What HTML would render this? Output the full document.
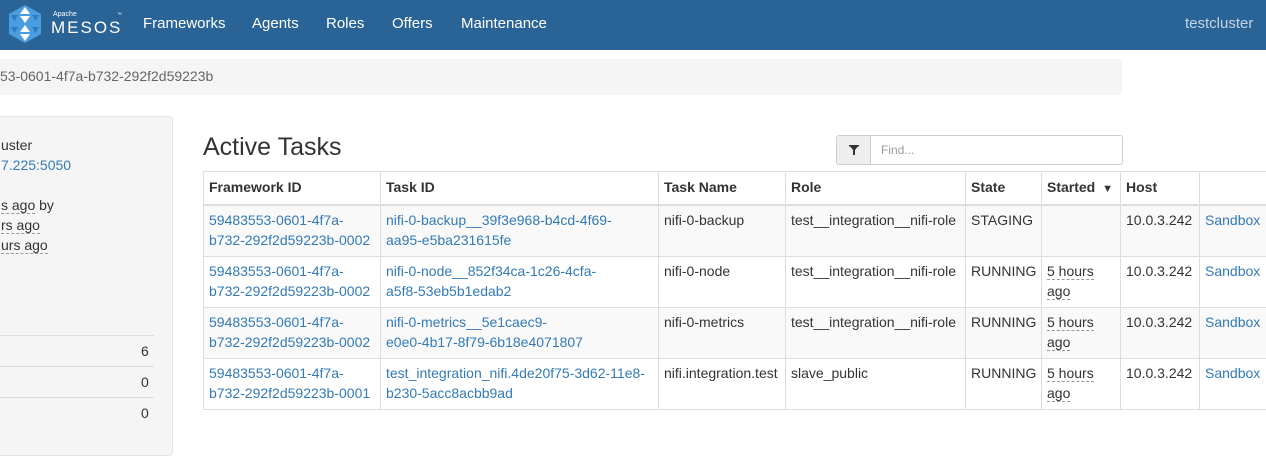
<!DOCTYPE html>
<html><head><style>
*{box-sizing:border-box}
body{margin:0;width:1266px;height:444px;overflow:hidden;background:#fff;font-family:"Liberation Sans",Arial,sans-serif;font-size:14px;color:#333;position:relative}
.nav{position:absolute;left:0;top:0;width:1266px;height:50px;background:#2a6496}
.nav a{position:absolute;top:15px;color:#fff;font-size:15px;text-decoration:none}
.bc{position:absolute;left:-10px;top:59px;width:1132px;height:36px;background:#f5f5f5;border-radius:4px;color:#666;font-size:14px;padding:9px 0 0 10px}
.well{position:absolute;left:-10px;top:116px;width:183px;height:340px;background:#f5f5f5;border:1px solid #e3e3e3;border-radius:4px}
.t{position:absolute;line-height:20px}
.lnk{color:#337ab7}
.dash{border-bottom:1px dashed #999}
h2{position:absolute;left:203px;top:133px;margin:0;font-weight:400;font-size:25px;color:#333}
.srch{position:absolute;left:836px;top:135px;width:287px;height:30px;border:1px solid #ccc;border-radius:3px}
.srch .b{position:absolute;left:0;top:0;width:34px;height:28px;background:#eee;border-right:1px solid #ccc}
.srch span{position:absolute;left:44px;top:7px;color:#999;font-size:12px}
table{position:absolute;left:203px;top:171px;border-collapse:collapse;table-layout:fixed;width:1100px;font-size:14px}
td,th{border:1px solid #ddd;padding:4px 5px 5px;vertical-align:top;text-align:left;line-height:20px;white-space:nowrap;overflow:hidden}
th{height:32px;border-bottom:2px solid #ddd;font-weight:bold;padding-top:5px}
td{height:51px}
tr.o td{background:#f9f9f9}
td a{color:#337ab7;text-decoration:none}
</style></head><body>
<div class="nav">
<svg style="position:absolute;left:7px;top:4px" width="36" height="40" viewBox="0 0 36 40">
<polygon points="18,1 34,10 34,30 18,39 2,30 2,10" fill="#4a9ee0"/>
<g fill="#fff"><polygon points="18,3 23,10 13,10"/><polygon points="13,12 23,12 18,19"/><polygon points="18,21 23,28 13,28"/><polygon points="13,30 23,30 18,37"/></g>
<g fill="#2f7bc1"><polygon points="4,11 11,11 7.5,17"/><polygon points="25,11 32,11 28.5,17"/><polygon points="4,23 11,23 7.5,29"/><polygon points="25,23 32,23 28.5,29"/></g>
</svg>
<div style="position:absolute;left:53px;top:11px;color:#fff;font-size:7px">Apache</div>
<div style="position:absolute;left:51px;top:18px;color:#fff;font-size:17px;letter-spacing:2px;font-weight:300">MESOS</div>
<div style="position:absolute;left:117px;top:12px;color:#fff;font-size:5px">™</div>
<a style="left:143px">Frameworks</a><a style="left:252px">Agents</a><a style="left:326px">Roles</a><a style="left:392px">Offers</a><a style="left:461px">Maintenance</a>
<a style="left:1185px;color:#c5d5e5">testcluster</a>
</div>
<div class="bc">53-0601-4f7a-b732-292f2d59223b</div>
<div class="well">
<div class="t" style="left:10px;top:18px">uster</div>
<div class="t lnk" style="left:10px;top:38px">7.225:5050</div>
<div class="t" style="left:10px;top:78px"><span class="dash">s ago</span> by</div>
<div class="t" style="left:10px;top:98px"><span class="dash">rs ago</span></div>
<div class="t" style="left:10px;top:118px"><span class="dash">urs ago</span></div>
<div style="position:absolute;left:0;top:218px;width:163px;border-top:1px solid #ddd"></div>
<div class="t" style="left:150px;top:224px">6</div>
<div style="position:absolute;left:0;top:249px;width:163px;border-top:1px solid #ddd"></div>
<div class="t" style="left:150px;top:255px">0</div>
<div style="position:absolute;left:0;top:280px;width:163px;border-top:1px solid #ddd"></div>
<div class="t" style="left:150px;top:286px">0</div>
</div>
<h2>Active Tasks</h2>
<div class="srch"><div class="b"><svg style="position:absolute;left:12px;top:9px" width="10" height="10" viewBox="0 0 10 10"><polygon points="0,0 10,0 6,5 6,10 4,10 4,5" fill="#333"/><rect x="0" y="0" width="10" height="1.5" fill="#333"/></svg></div><span>Find...</span></div>
<table>
<colgroup><col style="width:177px"><col style="width:278px"><col style="width:127px"><col style="width:180px"><col style="width:76px"><col style="width:79px"><col style="width:79px"><col style="width:104px"></colgroup>
<tr><th>Framework ID</th><th>Task ID</th><th>Task Name</th><th>Role</th><th>State</th><th>Started <span style="font-size:11px;margin-left:3px">▼</span></th><th>Host</th><th></th></tr>
<tr class="o"><td><a>59483553-0601-4f7a-<br>b732-292f2d59223b-0002</a></td><td><a>nifi-0-backup__39f3e968-b4cd-4f69-<br>aa95-e5ba231615fe</a></td><td>nifi-0-backup</td><td>test__integration__nifi-role</td><td>STAGING</td><td></td><td>10.0.3.242</td><td><a>Sandbox</a></td></tr>
<tr><td><a>59483553-0601-4f7a-<br>b732-292f2d59223b-0002</a></td><td><a>nifi-0-node__852f34ca-1c26-4cfa-<br>a5f8-53eb5b1edab2</a></td><td>nifi-0-node</td><td>test__integration__nifi-role</td><td>RUNNING</td><td><span class="dash">5 hours</span><br><span class="dash">ago</span></td><td>10.0.3.242</td><td><a>Sandbox</a></td></tr>
<tr class="o"><td><a>59483553-0601-4f7a-<br>b732-292f2d59223b-0002</a></td><td><a>nifi-0-metrics__5e1caec9-<br>e0e0-4b17-8f79-6b18e4071807</a></td><td>nifi-0-metrics</td><td>test__integration__nifi-role</td><td>RUNNING</td><td><span class="dash">5 hours</span><br><span class="dash">ago</span></td><td>10.0.3.242</td><td><a>Sandbox</a></td></tr>
<tr><td><a>59483553-0601-4f7a-<br>b732-292f2d59223b-0001</a></td><td><a>test_integration_nifi.4de20f75-3d62-11e8-<br>b230-5acc8acbb9ad</a></td><td>nifi.integration.test</td><td>slave_public</td><td>RUNNING</td><td><span class="dash">5 hours</span><br><span class="dash">ago</span></td><td>10.0.3.242</td><td><a>Sandbox</a></td></tr>
</table>
</body></html>
